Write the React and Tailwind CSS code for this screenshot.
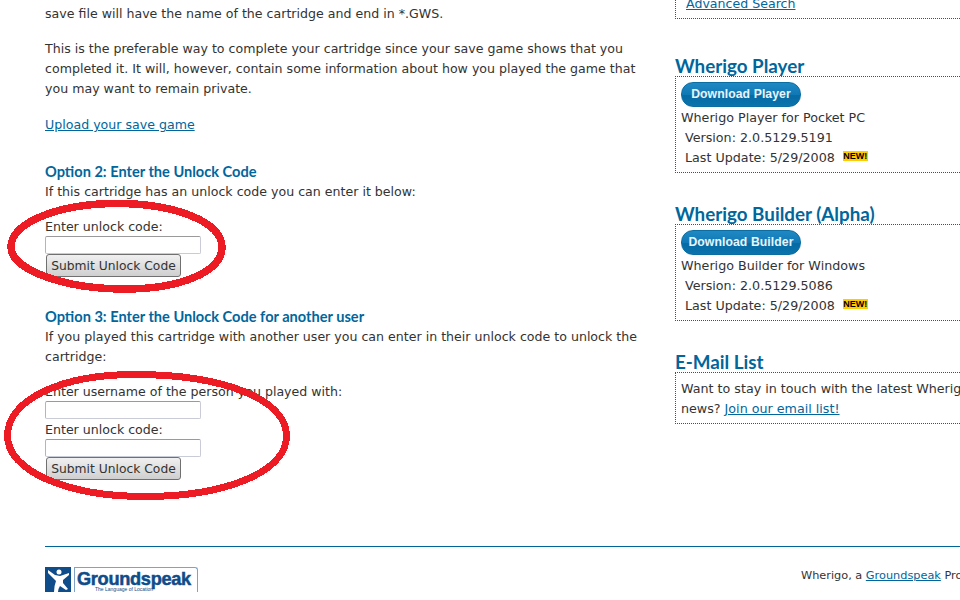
// App.jsx
const bodyFont = { fontFamily: '"DejaVu Sans", Verdana, sans-serif' };

function NewBadge() {
  return (
    <span className="ml-[8px] inline-block h-[10px] w-[25px] bg-[#ffcc00] text-center align-[3px] font-['Liberation_Sans',sans-serif] text-[9px] leading-[10px] font-bold text-black">
      NEW!
    </span>
  );
}

function DownloadButton({ children }) {
  return (
    <a className="flex h-[25px] w-[120px] items-center justify-center rounded-[12px] border border-[#0b6ea3] bg-[linear-gradient(#2089c4_0%,#1079b5_50%,#066aa3_55%,#0a74ad_100%)] pb-[1px] font-['Liberation_Sans',sans-serif] text-[12.2px] font-bold tracking-[0.1px] text-[#e8f4fb]">
      {children}
    </a>
  );
}

function SideHeading({ children }) {
  return <h3 className="font-['Lato',sans-serif] text-[18.8px] leading-[20px] font-bold text-[#00669c]">{children}</h3>;
}

function DownloadBox({ title, button, name, version }) {
  return (
    <div className="mb-[31px]">
      <SideHeading>{title}</SideHeading>
      <div className="h-[97px] border-y border-l border-dotted border-[#006699] pt-[5px] pl-[5px] text-[12.7px]">
        <DownloadButton>{button}</DownloadButton>
        <p className="mt-[1px] h-[20px] leading-[20px]">{name}</p>
        <p className="h-[20px] pl-[4px] leading-[20px]">Version: {version}</p>
        <p className="h-[20px] pl-[4px] leading-[20px]">
          Last Update: 5/29/2008
          <NewBadge />
        </p>
      </div>
    </div>
  );
}

function FormInput() {
  return <input type="text" className="block h-[18px] w-[156px] rounded-[2px] border border-[#c9ccd6] border-t-[#9a9a9a] border-l-[#b5b5b5] bg-white" />;
}

function SubmitButton() {
  return (
    <button className="ml-[1px] block h-[23px] w-[135px] rounded-[3px] border border-[#707070] bg-[linear-gradient(#f0f0f0,#cfcfcf)] pt-[2px] text-[12.3px] leading-[19px] text-[#333]">
      Submit Unlock Code
    </button>
  );
}

function OptionHeading({ children }) {
  return <h4 className="h-[20px] font-['Lato',sans-serif] text-[14.6px] leading-[20px] font-bold text-[#00669c]">{children}</h4>;
}

function Scribbles() {
  return (
    <svg className="pointer-events-none absolute top-0 left-0" width="960" height="592" shapeRendering="crispEdges">
      <path
        d="M117 203.5C175 203.5 222 222 222 247C222 272 180 289 125 289C65 289 11 270 11 247C11 222 60 203.5 117 203.5Z"
        fill="none"
        stroke="#ed1c24"
        strokeWidth="7.5"
      />
      <path
        d="M135 374.5C225 374.5 286.5 400 286.5 436C286.5 472 225 496.5 145 496.5C65 496.5 7.5 470 7.5 436C7.5 400 60 374.5 135 374.5Z"
        fill="none"
        stroke="#ed1c24"
        strokeWidth="7"
      />
    </svg>
  );
}

function GroundspeakLogo() {
  return (
    <div className="flex h-[25px] w-[153px] shrink-0 items-start overflow-hidden">
      <svg width="26" height="25" viewBox="0 0 26 25" className="shrink-0">
        <rect width="26" height="25" fill="#0f4c8a" />
        <circle cx="14" cy="5" r="2.5" fill="#fff" />
        <path d="M3 3L10 8L15 9L24 6L24 8L18 13L18 16L23 22L21 23L15 19Q13 22 13 25L9 25Q9 19 11 14L3 6Z" fill="#fff" />
      </svg>
      <div className="relative ml-[3px] h-[25px] w-[124px] rounded-tr-[3px] border-t border-r border-l border-[#7fa3c7]">
        <span className="block pt-[1px] pl-[2px] font-['Liberation_Sans',sans-serif] text-[18.2px] leading-[21px] font-bold tracking-[-0.3px] text-[#0f4c8a] [-webkit-text-stroke:0.5px_#0f4c8a]">
          Groundspeak
        </span>
        <span className="absolute top-[18px] left-[20px] font-['Liberation_Sans',sans-serif] text-[5px] leading-[6px] whitespace-nowrap text-[#0f4c8a]">
          The Language of Location
        </span>
      </div>
    </div>
  );
}

export default function App() {
  return (
    <div className="relative h-[592px] w-[960px] overflow-hidden bg-white text-[12.6px] leading-[20px] text-[#333]" style={bodyFont}>
      <div className="flex h-[546px] pl-[45px]">
        {/* Main column */}
        <div className="w-[630px] shrink-0">
          <div className="w-[600px] pt-[4px]">
            <p>save file will have the name of the cartridge and end in *.GWS.</p>
            <p className="mt-[15px]">
              This is the preferable way to complete your cartridge since your save game shows that you completed it. It will, however, contain some information about how you played the game that you may want to remain private.
            </p>
            <p className="mt-[16px]">
              <a className="text-[#00669c] underline">Upload your save game</a>
            </p>

            <div className="mt-[27px]">
              <OptionHeading>Option 2: Enter the Unlock Code</OptionHeading>
              <p>If this cartridge has an unlock code you can enter it below:</p>
              <p className="mt-[15px] h-[19px]">Enter unlock code:</p>
              <FormInput />
              <SubmitButton />
            </div>

            <div className="mt-[30px]">
              <OptionHeading>Option 3: Enter the Unlock Code for another user</OptionHeading>
              <p>If you played this cartridge with another user you can enter in their unlock code to unlock the cartridge:</p>
              <p className="mt-[15px] h-[19px]">Enter username of the person you played with:</p>
              <FormInput />
              <p className="h-[20px] pt-[1px]">Enter unlock code:</p>
              <FormInput />
              <SubmitButton />
            </div>
          </div>
        </div>

        {/* Sidebar */}
        <div className="w-[285px] shrink-0 whitespace-nowrap">
          <div className="mb-[37px] h-[25px] border-b border-l border-dotted border-[#006699] pl-[10px]">
            <a className="-mt-[6px] block leading-[20px] text-[#00669c] underline">Advanced Search</a>
          </div>
          <DownloadBox title="Wherigo Player" button="Download Player" name="Wherigo Player for Pocket PC" version="2.0.5129.5191" />
          <DownloadBox title="Wherigo Builder (Alpha)" button="Download Builder" name="Wherigo Builder for Windows" version="2.0.5129.5086" />
          <SideHeading>E-Mail List</SideHeading>
          <div className="h-[52px] border-y border-l border-dotted border-[#006699] pt-[6px] pl-[5px] text-[12.7px]">
            <p>Want to stay in touch with the latest Wherigo</p>
            <p>
              news? <a className="text-[#00669c] underline">Join our email list!</a>
            </p>
          </div>
        </div>
      </div>

      {/* Footer */}
      <div className="ml-[45px] flex border-t border-[#006699] pt-[20px]">
        <GroundspeakLogo />
        <p className="ml-[603px] shrink-0 pt-[1px] text-[11.3px] leading-[16px] whitespace-nowrap">
          Wherigo, a <a className="text-[#00669c] underline">Groundspeak</a> Product
        </p>
      </div>

      <Scribbles />
    </div>
  );
}
